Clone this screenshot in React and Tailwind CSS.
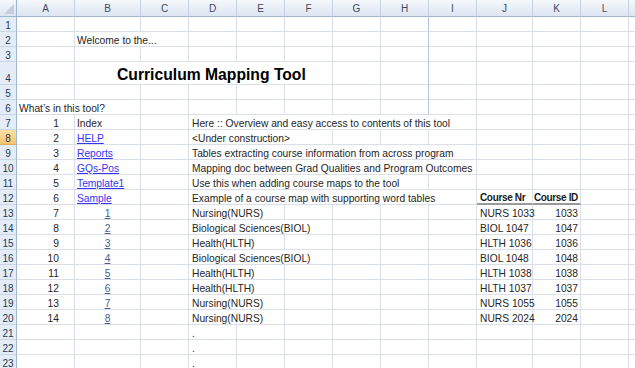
import React from "react";

const COLS = "ABCDEFGHIJKLM".split("");
const GRID =
  "grid grid-cols-[17px_58px_66px_48px_48px_48px_48px_48px_48px_48px_56px_48px_48px_48px]";
const SPAN = { 1: "", 2: "col-span-2", 3: "col-span-3", 5: "col-span-5", 6: "col-span-6" };

const CELL =
  "border-r border-b border-[#dadfe8] whitespace-nowrap flex items-end min-w-0";
const BODY = "leading-[11px] text-[10.25px] text-[#262626]";

const LINK = "text-[#3434f4] underline underline-offset-[1px]";
const NUMLINK = "text-[#3f5f8f] underline underline-offset-[1px]";

const num = (v) => ({ c: "A", t: v, cls: "justify-end pr-[15px]" });
const link = (v) => ({ c: "B", t: v, cls: "pl-[2px]", inner: LINK });
const nlink = (v) => ({ c: "B", t: v, cls: "justify-center", inner: NUMLINK });
const d = (v, span) => ({ c: "D", span, t: v, cls: "pl-[3px]" });
const cnr = (v) => ({ c: "J", t: v, cls: "pl-[3px]" });
const cid = (v) => ({ c: "K", t: v, cls: "justify-end pr-[2px]" });

const ROWS = [
  { n: 1, cells: [] },
  { n: 2, cells: [{ c: "B", span: 2, t: "Welcome to the...", cls: "pl-[2px]" }] },
  { n: 3, cells: [] },
  {
    n: 4,
    tall: true,
    cells: [
      {
        c: "B",
        span: 5,
        t: "Curriculum Mapping Tool",
        own: true,
        cls: "pl-[42px] text-[15.7px] font-bold leading-[18px] text-black",
      },
    ],
  },
  { n: 5, cells: [] },
  { n: 6, cells: [{ c: "A", span: 2, t: "What\u2019s in this tool?", cls: "pl-[2px]" }] },
  {
    n: 7,
    cells: [
      num("1"),
      { c: "B", t: "Index", cls: "pl-[2px]" },
      d("Here :: Overview and easy access to contents of this tool", 6),
    ],
  },
  { n: 8, sel: true, cells: [num("2"), link("HELP"), d("<Under construction>", 3)] },
  {
    n: 9,
    cells: [num("3"), link("Reports"), d("Tables extracting course information from across program", 6)],
  },
  {
    n: 10,
    cells: [num("4"), link("GQs-Pos"), d("Mapping doc between Grad Qualities and Program Outcomes", 6)],
  },
  {
    n: 11,
    cells: [num("5"), link("Template1"), d("Use this when adding course maps to the tool", 5)],
  },
  {
    n: 12,
    cells: [
      num("6"),
      link("Sample"),
      d("Example of a course map with supporting word tables", 6),
      {
        c: "J",
        t: "Course Nr",
        own: true,
        cls: "pl-[3px] font-bold leading-[11px] text-[10px] tracking-[-0.35px] text-[#1a1a1a] border-b-2 border-b-[#9a9a9a]",
      },
      {
        c: "K",
        t: "Course ID",
        own: true,
        cls: "justify-end pr-[2px] font-bold leading-[11px] text-[10px] tracking-[-0.35px] text-[#1a1a1a] border-b-2 border-b-[#9a9a9a]",
      },
    ],
  },
  { n: 13, cells: [num("7"), nlink("1"), d("Nursing(NURS)", 2), cnr("NURS 1033"), cid("1033")] },
  { n: 14, cells: [num("8"), nlink("2"), d("Biological Sciences(BIOL)", 3), cnr("BIOL 1047"), cid("1047")] },
  { n: 15, cells: [num("9"), nlink("3"), d("Health(HLTH)", 2), cnr("HLTH 1036"), cid("1036")] },
  { n: 16, cells: [num("10"), nlink("4"), d("Biological Sciences(BIOL)", 3), cnr("BIOL 1048"), cid("1048")] },
  { n: 17, cells: [num("11"), nlink("5"), d("Health(HLTH)", 2), cnr("HLTH 1038"), cid("1038")] },
  { n: 18, cells: [num("12"), nlink("6"), d("Health(HLTH)", 2), cnr("HLTH 1037"), cid("1037")] },
  { n: 19, cells: [num("13"), nlink("7"), d("Nursing(NURS)", 2), cnr("NURS 1055"), cid("1055")] },
  { n: 20, cells: [num("14"), nlink("8"), d("Nursing(NURS)", 2), cnr("NURS 2024"), cid("2024")] },
  { n: 21, cells: [d(".", 1)] },
  { n: 22, cells: [d(".", 1)] },
  { n: 23, cells: [d(".", 1)] },
];

function Row({ row }) {
  const out = [];
  let i = 0;
  while (i < COLS.length) {
    const col = COLS[i];
    const cell = row.cells.find((c) => c.c === col);
    const darkH = row.n <= 6 && col === "H";
    if (cell) {
      const span = cell.span || 1;
      out.push(
        <div
          key={col}
          className={`${CELL} ${cell.own ? "" : BODY} ${SPAN[span]} ${cell.cls || ""}`}
        >
          {cell.inner ? <span className={cell.inner}>{cell.t}</span> : cell.t}
        </div>
      );
      i += span;
    } else {
      out.push(
        <div
          key={col}
          className={`${CELL} ${darkH ? "border-r-[#b4c4da]" : ""}`}
        />
      );
      i += 1;
    }
  }
  return (
    <div className={`${GRID} ${row.tall ? "h-[23px]" : "h-[15px]"}`}>
      <div
        className={`flex items-end justify-center leading-[11px] text-[10px] text-[#2a3a52] border-r border-r-[#9eb6ce] border-b ${
          row.sel
            ? "bg-linear-to-b from-[#fbe0a6] to-[#f5c46d] border-b-[#e0b060]"
            : "bg-[#e4ecf7] border-b-[#c9d6e6]"
        }`}
      >
        {row.n}
      </div>
      {out}
    </div>
  );
}

export default function App() {
  return (
    <div className="w-[635px] h-[368px] overflow-hidden bg-white font-['Liberation_Sans',Arial,sans-serif]">
      <div className={`${GRID} h-[17px] bg-linear-to-b from-[#f5f8fc] to-[#dbe4f1]`}>
        <div className="relative border-r border-b border-r-[#9eb6ce] border-b-[#9eb6ce]">
          <svg className="absolute right-[2px] bottom-[2px]" width="10" height="10" viewBox="0 0 10 10">
            <polygon points="10,0 10,10 0,10" fill="#c3d0e0" />
          </svg>
        </div>
        {COLS.map((c) => (
          <div
            key={c}
            className="flex items-end justify-center pb-[2px] leading-[11px] text-[10px] text-[#3b4a60] border-r border-r-[#c3d2e5] border-b border-b-[#9eb6ce]"
          >
            {c === "M" ? "" : c}
          </div>
        ))}
      </div>
      {ROWS.map((r) => (
        <Row key={r.n} row={r} />
      ))}
    </div>
  );
}
